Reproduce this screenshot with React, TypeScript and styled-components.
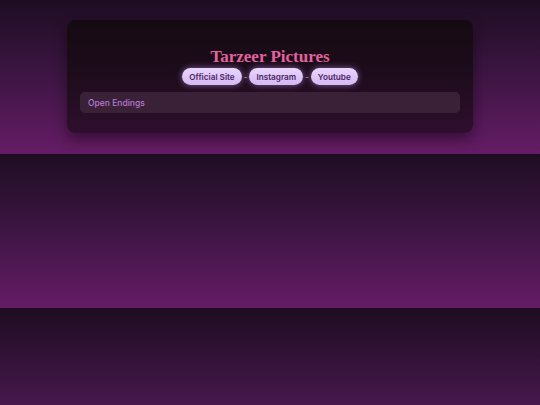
import React from "react"
import styled, { createGlobalStyle } from "styled-components"

const GlobalStyle = createGlobalStyle`
    html {
        background: linear-gradient(180deg, #1e0d22 0%, #3a1540 45%, #651c66 100%);
    }
    body {
        margin: 0;
        padding: 20px 0 21px;
        font-family: "Inter", "Liberation Sans", sans-serif;
    }
`

const links = ["Official Site", "Instagram", "Youtube"]

export default function App() {
    return (
        <>
            <GlobalStyle />
            <Card>
                <Title>Tarzeer Pictures</Title>
                <LinkRow>
                    {links.map((l, i) => (
                        <React.Fragment key={l}>
                            {i > 0 && <Dash>-</Dash>}
                            <Pill>{l}</Pill>
                        </React.Fragment>
                    ))}
                </LinkRow>
                <Item>Open Endings</Item>
            </Card>
        </>
    )
}

const Card = styled.div`
    width: 406px;
    margin: 0 auto;
    box-sizing: border-box;
    padding: 27px 13px 20px;
    border-radius: 8px;
    background: linear-gradient(180deg, #150a12 0%, #1e0c1c 50%, #2e0f2e 100%);
    box-shadow: 0 6px 14px rgba(10, 0, 10, 0.45);
    display: flex;
    flex-direction: column;
    align-items: center;
`

const Title = styled.div`
    font-family: "Liberation Serif", "DejaVu Serif", serif;
    font-weight: bold;
    font-size: 17px;
    line-height: 20px;
    color: #e2649f;
`

const LinkRow = styled.div`
    display: flex;
    align-items: center;
    margin-top: 1px;
`

const Dash = styled.span`
    font-size: 8px;
    color: #c9a6e0;
    padding: 0 2px;
`

const Pill = styled.div`
    height: 17px;
    padding: 0 7px;
    display: flex;
    align-items: center;
    border-radius: 9px;
    background: linear-gradient(180deg, #e9d6fb 0%, #d4b8f4 100%);
    box-shadow: 0 0 6px rgba(200, 150, 240, 0.6);
    color: #4b2563;
    font-size: 8.2px;
    font-weight: 600;
`

const Item = styled.div`
    align-self: stretch;
    margin-top: 7px;
    height: 21px;
    padding: 0 8px;
    display: flex;
    align-items: center;
    border-radius: 5px;
    background: #3b2138;
    color: #b47ad2;
    font-size: 8.5px;
    font-weight: 500;
`
